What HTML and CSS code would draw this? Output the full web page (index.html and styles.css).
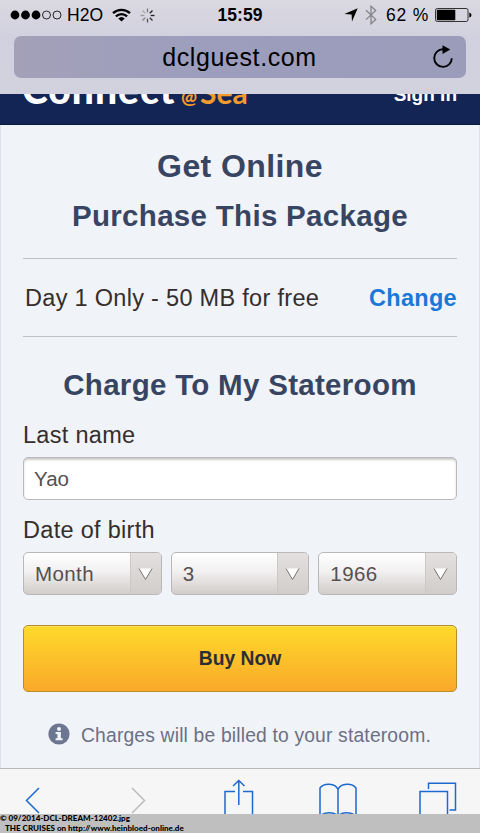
FILE: index.html
```
<!DOCTYPE html>
<html lang="en">
<head>
    <meta charset="UTF-8">
    <meta name="viewport" content="width=device-width, initial-scale=1.0">
    <title>Connect@Sea</title>
    <link rel="stylesheet" href="styles.css">
</head>
<body>
    <div class="browser-bar">
        <div class="status">
            <div class="status-left">
                <svg class="signal" width="52" height="10" viewBox="0 0 52 10">
                    <circle cx="5" cy="5" r="4.4"/>
                    <circle cx="15.5" cy="5" r="4.4"/>
                    <circle cx="26" cy="5" r="4.4"/>
                    <circle cx="36.5" cy="5" r="4" fill="none" stroke="#111" stroke-width="0.9"/>
                    <circle cx="47" cy="5" r="4" fill="none" stroke="#111" stroke-width="0.9"/>
                </svg>
                <span class="carrier">H2O</span>
                <svg class="wifi" width="19" height="14" viewBox="0 0 19 14">
                    <path d="M1 5.2A12.5 12.5 0 0 1 18 5.2M3.9 8.3A8.2 8.2 0 0 1 15.1 8.3" fill="none" stroke="#000" stroke-width="2.3"/>
                    <path d="M6.2 10.6A4.8 4.8 0 0 1 12.8 10.6L9.5 13.6Z"/>
                </svg>
                <svg class="spinner" width="15" height="15" viewBox="-7.5 -7.5 15 15" fill="none" stroke-width="1.3">
                    <path d="M0 -7V-3.2" stroke="#777"/>
                    <path d="M5 -5L2.3 -2.3" stroke="#222"/>
                    <path d="M7 0H3.2" stroke="#222"/>
                    <path d="M5 5L2.3 2.3" stroke="#333"/>
                    <path d="M0 7V3.2" stroke="#555"/>
                    <path d="M-5 5L-2.3 2.3" stroke="#888"/>
                    <path d="M-7 0H-3.2" stroke="#999"/>
                    <path d="M-5 -5L-2.3 -2.3" stroke="#aaa"/>
                </svg>
            </div>
            <span class="time">15:59</span>
            <div class="status-right">
                <svg width="14" height="14" viewBox="0 0 14 14">
                    <path d="M13.7 0.3L8 13.6L7.6 6.6L0.4 6.1Z"/>
                </svg>
                <svg class="bluetooth" width="12" height="20" viewBox="0 0 12 20">
                    <path d="M1 5.2L10.7 14.4L6 18.8V1.2L10.7 5.4L1 14.6" fill="none" stroke="#84848c" stroke-width="1.3"/>
                </svg>
                <span class="percent">62 %</span>
                <svg class="battery" width="37" height="14" viewBox="0 0 37 14">
                    <rect x="0.5" y="0.5" width="32.5" height="13" rx="1.8" fill="none" stroke="#333"/>
                    <rect x="1.8" y="1.8" width="18.5" height="10.4" rx="0.6"/>
                    <path d="M34.3 4.5Q36.5 5 36.5 7T34.3 9.5Z"/>
                </svg>
            </div>
        </div>
        <div class="address">
            <span class="url">dclguest.com</span>
            <svg class="reload" width="22" height="24" viewBox="0 0 22 24">
                <path d="M11 4.3A8.8 8.8 0 1 0 19.8 13.2" fill="none" stroke="#000" stroke-width="1.9"/>
                <path d="M10.5 0.2L18.3 4.6L10.5 9Z"/>
            </svg>
        </div>
    </div>

    <header>
        <div class="brand"><span class="connect">Connect</span><span class="at">@</span><span class="sea">Sea</span></div>
        <a class="sign-in" href="#">Sign In</a>
    </header>

    <main>
        <h1>Get Online</h1>
        <h2>Purchase This Package</h2>
        <div class="package">
            <span class="plan">Day 1 Only - 50 MB for free</span>
            <a class="change" href="#">Change</a>
        </div>
        <h2 class="charge">Charge To My Stateroom</h2>
        <label class="last-label" for="last-name">Last name</label>
        <input id="last-name" class="text-input" type="text" value="Yao">
        <label class="birth-label">Date of birth</label>
        <div class="birth">
            <div class="select">
                <span>Month</span>
                <div class="arrow"><svg width="15" height="14" viewBox="0 0 15 14"><path d="M1 1.5L7.5 12.5L14 1.5" fill="#fff" stroke="#77716f"/></svg></div>
            </div>
            <div class="select">
                <span>3</span>
                <div class="arrow"><svg width="15" height="14" viewBox="0 0 15 14"><path d="M1 1.5L7.5 12.5L14 1.5" fill="#fff" stroke="#77716f"/></svg></div>
            </div>
            <div class="select">
                <span>1966</span>
                <div class="arrow"><svg width="15" height="14" viewBox="0 0 15 14"><path d="M1 1.5L7.5 12.5L14 1.5" fill="#fff" stroke="#77716f"/></svg></div>
            </div>
        </div>
        <button class="buy">Buy Now</button>
        <p class="note">
            <svg width="22" height="22" viewBox="0 0 22 22">
                <circle cx="11" cy="11" r="10.6" fill="#6d7690"/>
                <circle cx="11" cy="6.1" r="2" fill="#f0f3f7"/>
                <path d="M7.6 9H12.9V15.2H14.6V17.2H7.6V15.2H9.4V11H7.6Z" fill="#f0f3f7"/>
            </svg>
            <span>Charges will be billed to your stateroom.</span>
        </p>
    </main>

    <nav class="toolbar">
        <svg class="back" width="15" height="27" viewBox="0 0 15 27"><path d="M14 1L1.5 13.5L14 26"/></svg>
        <svg class="forward" width="15" height="27" viewBox="0 0 15 27"><path d="M1 1L13.5 13.5L1 26"/></svg>
        <svg class="share" width="30" height="40" viewBox="0 0 30 40"><path d="M11 12.5H1V39H28.5V12.5H19M14.8 26V1.5M9 7L14.8 1.5L20.5 7"/></svg>
        <svg class="book" width="38" height="34" viewBox="0 0 38 34"><path d="M19 33V6.5C16 -0.2 5 -0.2 1 5V33C6 28.5 15 28.5 19 33C23 28.5 32 28.5 37 33V5C33 -0.2 22 -0.2 19 6.5"/></svg>
        <svg class="tabs" width="38" height="38" viewBox="0 0 38 38"><path d="M1 9.5H28.5V37H1ZM9.5 7V1.2H36.5V28H30.5"/></svg>
    </nav>
    <footer>
        <p class="file">© 09/2014-DCL-DREAM-12402.jpg</p>
        <p class="site">THE CRUISES on http://www.heinbloed-online.de</p>
    </footer>
</body>
</html>
```
FILE: styles.css
```
* {
    box-sizing: border-box;
}

body {
    margin: 0;
    width: 480px;
    height: 833px;
    overflow: hidden;
    display: flex;
    flex-direction: column;
    background-color: #f0f3f8;
    font-family: "Liberation Sans", Arial, sans-serif;
}

svg {
    display: block;
    flex: none;
}

/* Browser bar */
.browser-bar {
    flex: none;
    height: 94px;
    padding: 0 14px;
    background: linear-gradient(#dad9e1, #d1d0de 40%, #d2d2df);
}

.status {
    height: 36px;
    padding-bottom: 6px;
    margin: 0 -6px 0 -4px;
    display: grid;
    grid-template-columns: 1fr auto 1fr;
    align-items: center;
    font-size: 17.5px;
    line-height: 30px;
}

.status-left,
.status-right {
    display: flex;
    align-items: center;
}

.status-right {
    justify-content: flex-end;
}

.carrier {
    margin-left: 5px;
    letter-spacing: 0.1px;
}

.wifi {
    margin-left: 9px;
}

.spinner {
    margin-left: 9px;
}

.time {
    margin-right: 2px;
    font-weight: bold;
    font-size: 17.5px;
}

.bluetooth {
    margin-left: 7px;
}

.percent {
    margin-left: 9px;
    font-size: 17.5px;
    letter-spacing: 0.8px;
}

.battery {
    margin-left: 6px;
}

.address {
    height: 42px;
    padding: 0 12px 0 20px;
    border-radius: 7px;
    background: linear-gradient(90deg, #a3a0b8, #9d9ebd 40%, #9a9cba);
    display: flex;
    align-items: center;
}

.url {
    flex: 1;
    padding-left: 13px;
    text-align: center;
    font-size: 25px;
    letter-spacing: 0.6px;
}

/* Site header, scrolled partly under the browser bar */
header {
    flex: none;
    height: 31px;
    padding: 0 23px 0 22px;
    overflow: hidden;
    display: flex;
    justify-content: space-between;
    align-items: flex-start;
    background-color: #132554;
    border-bottom: 1px solid #0a183d;
}

.brand {
    display: flex;
    align-items: baseline;
    margin-top: -27px;
    line-height: 44px;
    font-family: Lato, sans-serif;
    font-weight: 900;
}

.connect {
    width: 159px;
    font-size: 39px;
    letter-spacing: 1px;
    color: #fff;
}

.at {
    width: 19px;
    font-size: 19px;
    color: #f29a2e;
}

.sea {
    font-size: 30px;
    font-weight: bold;
    color: #f29a2e;
}

.sign-in {
    margin-top: -11px;
    line-height: 24px;
    font-size: 19px;
    font-weight: bold;
    color: #fff;
    text-decoration: none;
}

/* Form */
main {
    flex: none;
    height: 643px;
    padding: 23px 22px 0;
    border-left: 1px solid #dde1e8;
    border-right: 1px solid #dde1e8;
    color: #352e2d;
    font-size: 23.5px;
}

h1,
h2 {
    margin: 0;
    text-align: center;
    white-space: nowrap;
    color: #384562;
}

h1 {
    font-size: 32px;
    line-height: 36px;
    letter-spacing: 0.4px;
}

h2 {
    margin-top: 15px;
    font-size: 29.5px;
    line-height: 34px;
    letter-spacing: 0.3px;
}

.package {
    height: 79px;
    margin-top: 25px;
    padding: 2px 0 0 2px;
    display: flex;
    justify-content: space-between;
    align-items: center;
    border-top: 1px solid #bebfc1;
    border-bottom: 1px solid #bebfc1;
    letter-spacing: 0.3px;
}

.change {
    color: #1b78d8;
    font-weight: bold;
    text-decoration: none;
}

.charge {
    margin-top: 31px;
}

label {
    display: block;
    line-height: 28px;
    letter-spacing: 0.3px;
}

.last-label {
    margin-top: 19px;
}

.birth-label {
    margin-top: 16px;
}

.text-input {
    display: block;
    width: 100%;
    height: 43px;
    margin-top: 8px;
    padding: 0 10px;
    border: 1px solid #bdb9b9;
    border-radius: 5px;
    background-color: #fff;
    box-shadow: inset 0 2px 2px #d0cccc;
    font-family: inherit;
    font-size: 20.5px;
    color: #56504f;
}

.birth {
    display: grid;
    grid-template-columns: repeat(3, 1fr);
    gap: 9px;
    margin-top: 8px;
}

.select {
    height: 43px;
    display: flex;
    justify-content: space-between;
    align-items: center;
    padding-left: 11px;
    overflow: hidden;
    border: 1px solid #bbb7b6;
    border-radius: 5px;
    background: linear-gradient(#fff, #f2f0f0 45%, #d1cdcb);
    font-size: 20.5px;
    letter-spacing: 0.4px;
    color: #56504f;
}

.arrow {
    width: 31px;
    height: 100%;
    padding-right: 1px;
    display: flex;
    justify-content: center;
    align-items: center;
    border-left: 1px solid #ccc8c6;
    background: linear-gradient(#e3e0df, #d1cdcb);
}

.buy {
    display: block;
    width: 100%;
    height: 67px;
    margin-top: 30px;
    padding: 0;
    border: 1px solid #b88d29;
    border-radius: 5px;
    background: linear-gradient(#ffda2b, #faa92a);
    box-shadow: inset 0 1px 0 #ffe35d;
    font-family: inherit;
    font-size: 19.3px;
    font-weight: bold;
    color: #2c2e36;
}

.note {
    margin: 30px 0 0;
    padding-left: 25px;
    display: flex;
    align-items: center;
    gap: 11px;
    font-size: 19.3px;
    line-height: 26px;
    letter-spacing: 0.17px;
    color: #6b7085;
    white-space: nowrap;
}

.note svg {
    margin-bottom: 3px;
}

.note span {
    padding-top: 1px;
}

/* Safari toolbar */
.toolbar {
    flex: none;
    height: 46px;
    overflow: hidden;
    display: flex;
    align-items: flex-start;
    padding-left: 25px;
    border-top: 1px solid #b8b8bb;
    background-color: #f7f6f7;
    fill: none;
    stroke: #1c69d0;
    stroke-width: 1.5;
}

.back {
    margin-top: 18px;
}

.forward {
    margin: 18px 0 0 91px;
    stroke: #bcbbbb;
}

.share {
    margin: 10px 0 0 78px;
}

.book {
    margin: 14px 0 0 65px;
}

.tabs {
    margin: 13px 0 0 62px;
}

footer {
    flex: none;
    height: 19px;
    background-color: #bfbfbf;
    color: #000;
    font-family: Lato, sans-serif;
    font-size: 8.05px;
    font-weight: 900;
    line-height: 9.5px;
    white-space: nowrap;
}

footer p {
    margin: 0;
}

.site {
    padding-left: 5px;
}
```
